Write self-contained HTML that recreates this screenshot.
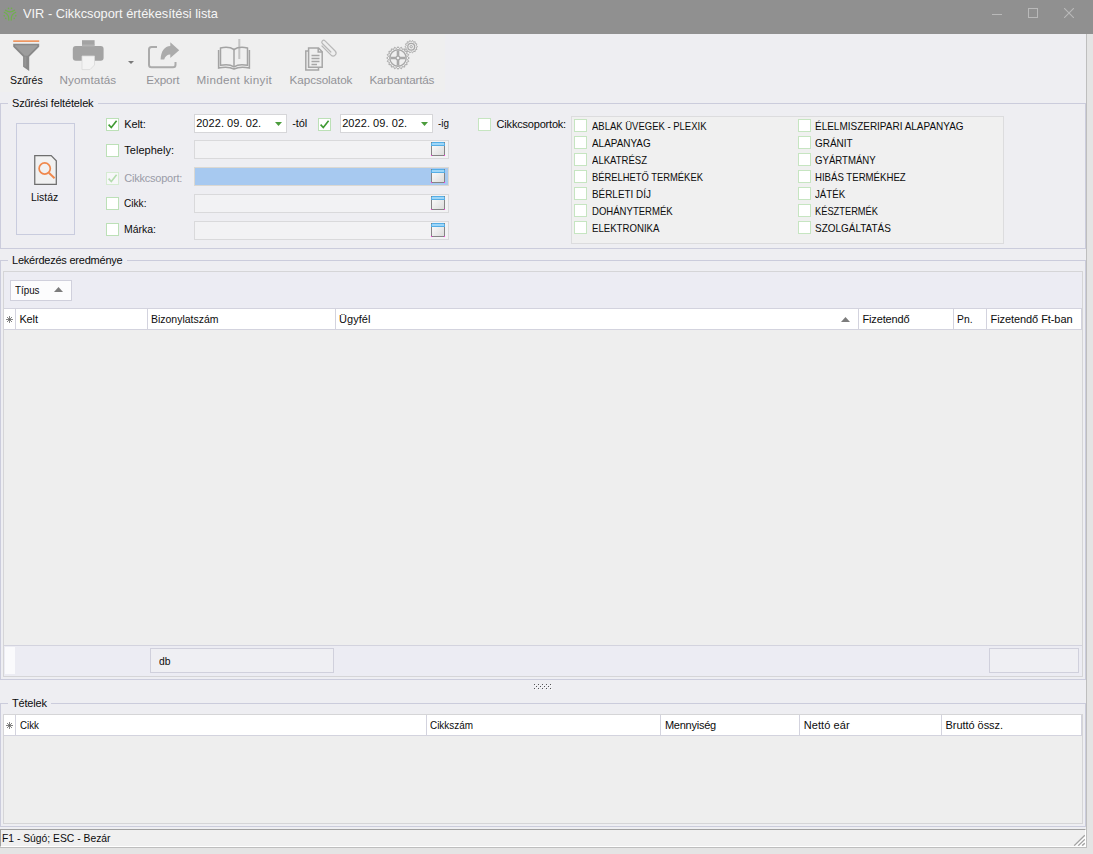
<!DOCTYPE html>
<html lang="hu">
<head>
<meta charset="utf-8">
<title>VIR - Cikkcsoport értékesítési lista</title>
<style>
html,body{margin:0;padding:0;}
body{width:1093px;height:854px;overflow:hidden;position:relative;background:#eeeef2;font-family:"Liberation Sans","DejaVu Sans",sans-serif;font-size:11px;color:#0c0c0c;}
.a{position:absolute;}
.t{position:absolute;white-space:nowrap;line-height:15px;height:15px;transform-origin:0 50%;}
</style>
</head>
<body>
<div class="a" style="left:0px;top:0px;width:1093px;height:34px;background:#909090;"></div>
<svg class="a" style="left:0;top:0;" width="20" height="28" viewBox="0 0 20 28"><g transform="translate(10 14.200)"><path d="M-4.500 -4 Q0 -0.800 4.500 -4" fill="none" stroke="#70b04c" stroke-width="1.250" stroke-linecap="round"/><circle cx="-1.500" cy="-5.800" r="0.800" fill="#70b04c"/><circle cx="1.500" cy="-5.800" r="0.800" fill="#70b04c"/><g transform="rotate(120)"><path d="M-4.500 -4 Q0 -0.800 4.500 -4" fill="none" stroke="#70b04c" stroke-width="1.250" stroke-linecap="round"/><circle cx="-1.500" cy="-5.800" r="0.800" fill="#70b04c"/><circle cx="1.500" cy="-5.800" r="0.800" fill="#70b04c"/></g><g transform="rotate(240)"><path d="M-4.500 -4 Q0 -0.800 4.500 -4" fill="none" stroke="#70b04c" stroke-width="1.250" stroke-linecap="round"/><circle cx="-1.500" cy="-5.800" r="0.800" fill="#70b04c"/><circle cx="1.500" cy="-5.800" r="0.800" fill="#70b04c"/></g></g></svg>
<div class="t" style="left:23.4px;top:5.9px;font-size:13.5px;transform:scaleX(0.9486);color:#f6f6f6;">VIR - Cikkcsoport értékesítési lista</div>
<div class="a" style="left:992px;top:14px;width:10px;height:1px;background:#b9b9b9;"></div>
<div class="a" style="left:1028px;top:8px;width:10px;height:10px;box-sizing:border-box;border:1px solid #b9b9b9;"></div>
<svg class="a" style="left:1064px;top:8px;" width="10" height="10" viewBox="0 0 10 10"><path d="M0 0L10 10M10 0L0 10" stroke="#b9b9b9" stroke-width="1.1"/></svg>
<div class="a" style="left:1087px;top:34px;width:6px;height:820px;background:#e4e4e4;"></div>
<div class="a" style="left:1086px;top:34px;width:1px;height:814px;background:#bebebe;"></div>
<div class="a" style="left:0px;top:34px;width:445px;height:58px;background:#efefef;"></div>
<svg class="a" style="left:12px;top:39px;" width="28" height="33" viewBox="0 0 28 33">
<rect x="1.200" y="1.300" width="26" height="1.700" fill="#ee9660"/>
<path d="M1.200 4.800 H27.200 V7.800 L17.200 17.800 V31.900 L11.100 27.700 V17.800 L1.200 7.800 Z" fill="#888888"/>
<path d="M3.200 6.300 H25.200 V7.200 L15.700 16.700 H12.700 L3.200 7.200 Z" fill="#9d9d9d"/>
<rect x="12.400" y="17.500" width="2" height="10" fill="#959595"/>
</svg>
<svg class="a" style="left:72px;top:39px;" width="33" height="32" viewBox="0 0 33 32">
<rect x="10" y="1.2" width="12.600" height="5" fill="#a3a3a3"/>
<rect x="0.800" y="6.900" width="30.800" height="14.800" rx="3" ry="3" fill="#a3a3a3"/>
<rect x="10" y="5.500" width="12.600" height="2" fill="#b2b2b2"/><path d="M10 17 H22.500 V26 L18 30.600 H10 Z" fill="#f3f3f3" stroke="#d9d9d9" stroke-width="0.800"/>
</svg>
<svg class="a" style="left:128px;top:61px;" width="6" height="3" viewBox="0 0 6 3"><path d="M0 0H6L3 3Z" fill="#7a7a7a"/></svg>
<svg class="a" style="left:146px;top:40px;" width="36" height="30" viewBox="0 0 36 30">
<path d="M11 7 H5.500 Q3 7 3 9.500 V24.800 Q3 27.300 5.500 27.300 H27 Q29.500 27.300 29.500 24.800 V22" fill="none" stroke="#ababab" stroke-width="2"/>
<path d="M14.600 19.600 C15 11 18.500 6.300 24.300 6 V2.200 L33.200 10.200 L24.300 18 V14.500 C21 14.500 19 16.500 18.200 19.600 Z" fill="#ababab"/>
</svg>
<svg class="a" style="left:217px;top:38px;" width="34" height="33" viewBox="0 0 34 33">
<rect x="21.300" y="1" width="2" height="20" fill="#c4c4c4"/>
<g fill="none" stroke="#a3a3a3" stroke-width="1.500">
<path d="M17 11.500 C13.500 9.200 8 9 3.500 10 V27.300 C8 26.300 13.500 26.500 17 28.800 C20.500 26.500 26 26.300 30.500 27.300 V10 C26 9 20.500 9.200 17 11.500 Z"/>
<path d="M17 11.500 V28.800"/>
<path d="M1.600 12 V30 C7 28.800 13 29 17 31 C21 29 27 28.800 32.400 30 V12"/>
</g></svg>
<svg class="a" style="left:303px;top:38px;" width="36" height="34" viewBox="0 0 36 34">
<g fill="none" stroke="#a6a6a6" stroke-width="1.500">
<path d="M5.600 10 H15.500 L19.200 13.700 V29.200 H5.600 Z"/>
<path d="M15.200 10 V14 H19.200"/>
<path d="M5.600 13 H2.800 V32 H15.500 V29.200"/>
</g>
<g stroke="#a6a6a6" stroke-width="1.300"><path d="M8.500 17.500H16.500M8.500 20.500H16.500M8.500 23.500H16.500M8.500 26.500H14"/></g>
<g fill="none" stroke="#b8b8b8" stroke-width="1.200" stroke-linecap="round" transform="translate(25.400 10.300) rotate(225) translate(-9.850 -4.100)"><path d="M16 1.200 H3.200 A2.900 2.900 0 0 0 3.200 7 H17.500 A1.900 1.900 0 0 0 17.500 3.200 H5.500"/></g>
</svg>
<svg class="a" style="left:384px;top:36px;" width="36" height="36" viewBox="0 0 36 36"><path d="M25.30 22.00 L23.48 23.50 L24.75 25.49 L22.55 26.36 L23.14 28.64 L20.79 28.79 L20.64 31.14 L18.36 30.55 L17.49 32.75 L15.50 31.48 L14.00 33.30 L12.50 31.48 L10.51 32.75 L9.64 30.55 L7.36 31.14 L7.21 28.79 L4.86 28.64 L5.45 26.36 L3.25 25.49 L4.52 23.50 L2.70 22.00 L4.52 20.50 L3.25 18.51 L5.45 17.64 L4.86 15.36 L7.21 15.21 L7.36 12.86 L9.64 13.45 L10.51 11.25 L12.50 12.52 L14.00 10.70 L15.50 12.52 L17.49 11.25 L18.36 13.45 L20.64 12.86 L20.79 15.21 L23.14 15.36 L22.55 17.64 L24.75 18.51 L23.48 20.50 Z" fill="none" stroke="#a8a8a8" stroke-width="1.0" stroke-linejoin="round"/><circle cx="14" cy="22" r="8.2" fill="none" stroke="#a8a8a8" stroke-width="1.4"/><circle cx="14" cy="22" r="1.9" fill="none" stroke="#a8a8a8" stroke-width="1.2"/><path d="M14 14.500V20M14 24V29.500M6.500 22H12M16 22H21.500" stroke="#a8a8a8" stroke-width="2.6"/><path d="M33.60 10.70 L32.07 11.81 L32.97 13.48 L31.11 13.82 L31.19 15.70 L29.37 15.20 L28.62 16.94 L27.20 15.70 L25.78 16.94 L25.03 15.20 L23.21 15.70 L23.29 13.82 L21.43 13.48 L22.33 11.81 L20.80 10.70 L22.33 9.59 L21.43 7.92 L23.29 7.58 L23.21 5.70 L25.03 6.20 L25.78 4.46 L27.20 5.70 L28.62 4.46 L29.37 6.20 L31.19 5.70 L31.11 7.58 L32.97 7.92 L32.07 9.59 Z" fill="none" stroke="#a8a8a8" stroke-width="0.9" stroke-linejoin="round"/><circle cx="27.200" cy="10.700" r="3.400" fill="none" stroke="#a8a8a8" stroke-width="1.300"/><circle cx="27.200" cy="10.700" r="1.200" fill="none" stroke="#a8a8a8" stroke-width="1"/></svg>
<div class="t" style="left:10.2px;top:71.7px;font-size:11.7px;transform:scaleX(0.8986);color:#111;">Szűrés</div>
<div class="t" style="left:59.5px;top:71.7px;font-size:11.7px;letter-spacing:0.105px;color:#939398;">Nyomtatás</div>
<div class="t" style="left:146.2px;top:71.7px;font-size:11.7px;letter-spacing:-0.097px;color:#939398;">Export</div>
<div class="t" style="left:196.5px;top:71.7px;font-size:11.7px;letter-spacing:0.295px;color:#939398;">Mindent kinyit</div>
<div class="t" style="left:289.6px;top:71.7px;font-size:11.7px;letter-spacing:-0.088px;color:#939398;">Kapcsolatok</div>
<div class="t" style="left:369.4px;top:71.7px;font-size:11.7px;letter-spacing:-0.168px;color:#939398;">Karbantartás</div>
<div class="a" style="left:0px;top:103px;width:1086px;height:146px;box-sizing:border-box;border:1px solid #cbccdc;"></div>
<div class="a" style="left:8px;top:97px;width:89.5px;height:13px;background:#eeeef2;"></div>
<div class="t" style="left:12.0px;top:96.0px;font-size:11px;letter-spacing:-0.126px;">Szűrési feltételek</div>
<div class="a" style="left:0px;top:260px;width:1086px;height:420px;box-sizing:border-box;border:1px solid #cbccdc;"></div>
<div class="a" style="left:8px;top:254px;width:118.5px;height:13px;background:#eeeef2;"></div>
<div class="t" style="left:12.0px;top:253.0px;font-size:11px;letter-spacing:-0.223px;">Lekérdezés eredménye</div>
<div class="a" style="left:0px;top:703px;width:1086px;height:124px;box-sizing:border-box;border:1px solid #cbccdc;"></div>
<div class="a" style="left:8px;top:697px;width:42.7px;height:13px;background:#eeeef2;"></div>
<div class="t" style="left:12.0px;top:696.0px;font-size:11px;letter-spacing:-0.197px;">Tételek</div>
<div class="a" style="left:16px;top:123px;width:59px;height:112px;background:#eeeef3;box-sizing:border-box;border:1px solid #c9ccde;"></div>
<svg class="a" style="left:32px;top:153px;" width="28" height="34" viewBox="0 0 28 34"><path d="M2.750 2.600 H19.200 L24.300 7.700 V31.300 H2.750 Z" fill="#f1f1f1" stroke="#6e6e6e" stroke-width="1.250" stroke-linejoin="miter"/><circle cx="12.700" cy="15.500" r="5.600" fill="none" stroke="#f0884c" stroke-width="1.700"/><path d="M16.800 19.800 L22.600 25.300" stroke="#f0884c" stroke-width="2" stroke-linecap="butt"/></svg>
<div class="t" style="left:31.3px;top:189.9px;font-size:11px;transform:scaleX(0.9426);">Listáz</div>
<div class="a" style="left:106px;top:118px;width:13px;height:13px;background:#fff;box-sizing:border-box;border:1px solid #bce0b7;"><svg width="11" height="11" viewBox="0 0 11 11" style="position:absolute;left:0;top:0"><path d="M1.600 5.600 L4.300 8.600 L9.600 1.800" fill="none" stroke="#3f9a32" stroke-width="1.600"/></svg></div>
<div class="t" style="left:124.2px;top:116.9px;font-size:11px;letter-spacing:-0.103px;">Kelt:</div>
<div class="a" style="left:106px;top:144px;width:13px;height:13px;background:#fff;box-sizing:border-box;border:1px solid #bce0b7;"></div>
<div class="t" style="left:124.2px;top:142.9px;font-size:11px;letter-spacing:0.045px;">Telephely:</div>
<div class="a" style="left:106px;top:172px;width:13px;height:13px;background:#f7f7f9;box-sizing:border-box;border:1px solid #d6ebd2;"><svg width="11" height="11" viewBox="0 0 11 11" style="position:absolute;left:0;top:0"><path d="M1.600 5.600 L4.300 8.600 L9.600 1.800" fill="none" stroke="#b4dcae" stroke-width="1.600"/></svg></div>
<div class="t" style="left:124.2px;top:170.9px;font-size:11px;letter-spacing:-0.211px;color:#9a9ca8;">Cikkcsoport:</div>
<div class="a" style="left:106px;top:197px;width:13px;height:13px;background:#fff;box-sizing:border-box;border:1px solid #bce0b7;"></div>
<div class="t" style="left:124.2px;top:195.9px;font-size:11px;transform:scaleX(0.9201);">Cikk:</div>
<div class="a" style="left:106px;top:223px;width:13px;height:13px;background:#fff;box-sizing:border-box;border:1px solid #bce0b7;"></div>
<div class="t" style="left:124.2px;top:221.9px;font-size:11px;transform:scaleX(0.9517);">Márka:</div>
<div class="a" style="left:194px;top:114px;width:93px;height:19px;background:#fff;box-sizing:border-box;border:1px solid #d6d6d9;"><svg width="7" height="4" viewBox="0 0 7 4" style="position:absolute;left:80px;top:7px"><path d="M0 0 H7 L3.500 4 Z" fill="#4b9c3c"/></svg></div>
<div class="t" style="left:196.2px;top:116.0px;font-size:11px;letter-spacing:0.059px;">2022. 09. 02.</div>
<div class="t" style="left:292.2px;top:116.0px;font-size:11px;letter-spacing:-0.070px;">-tól</div>
<div class="a" style="left:318px;top:118px;width:13px;height:13px;background:#fff;box-sizing:border-box;border:1px solid #bce0b7;"><svg width="11" height="11" viewBox="0 0 11 11" style="position:absolute;left:0;top:0"><path d="M1.600 5.600 L4.300 8.600 L9.600 1.800" fill="none" stroke="#3f9a32" stroke-width="1.600"/></svg></div>
<div class="a" style="left:340px;top:114px;width:93px;height:19px;background:#fff;box-sizing:border-box;border:1px solid #d6d6d9;"><svg width="7" height="4" viewBox="0 0 7 4" style="position:absolute;left:80px;top:7px"><path d="M0 0 H7 L3.500 4 Z" fill="#4b9c3c"/></svg></div>
<div class="t" style="left:342.2px;top:116.0px;font-size:11px;letter-spacing:0.059px;">2022. 09. 02.</div>
<div class="t" style="left:438.2px;top:116.0px;font-size:11px;transform:scaleX(0.8991);">-ig</div>
<div class="a" style="left:194px;top:140px;width:255px;height:19px;background:#f2f2f4;box-sizing:border-box;border:1px solid #d9d9db;"><svg width="14" height="14" viewBox="0 0 14 14" style="position:absolute;left:236px;top:1px"><defs><linearGradient id="wg0" x1="0" y1="0" x2="1" y2="1"><stop offset="0" stop-color="#ffffff"/><stop offset="1" stop-color="#dadada"/></linearGradient></defs><rect x="0.500" y="0.500" width="13" height="13" fill="url(#wg0)" stroke="#858585"/><path d="M1 0H13V1H14V4H0V1H1Z" fill="#55aee6"/><rect x="1" y="1" width="12" height="2" fill="#9fd6f7"/><rect x="0" y="13" width="1" height="1" fill="#ff30e0"/><rect x="13" y="13" width="1" height="1" fill="#ff30e0"/></svg></div>
<div class="a" style="left:194px;top:167px;width:255px;height:19px;background:#a7c9f0;box-sizing:border-box;border:1px solid #dbd8d2;"><svg width="14" height="14" viewBox="0 0 14 14" style="position:absolute;left:236px;top:1px"><defs><linearGradient id="wg1" x1="0" y1="0" x2="1" y2="1"><stop offset="0" stop-color="#ffffff"/><stop offset="1" stop-color="#dadada"/></linearGradient></defs><rect x="0.500" y="0.500" width="13" height="13" fill="url(#wg1)" stroke="#858585"/><path d="M1 0H13V1H14V4H0V1H1Z" fill="#55aee6"/><rect x="1" y="1" width="12" height="2" fill="#9fd6f7"/><rect x="0" y="13" width="1" height="1" fill="#ff30e0"/><rect x="13" y="13" width="1" height="1" fill="#ff30e0"/></svg></div>
<div class="a" style="left:194px;top:194px;width:255px;height:19px;background:#f2f2f4;box-sizing:border-box;border:1px solid #d9d9db;"><svg width="14" height="14" viewBox="0 0 14 14" style="position:absolute;left:236px;top:1px"><defs><linearGradient id="wg2" x1="0" y1="0" x2="1" y2="1"><stop offset="0" stop-color="#ffffff"/><stop offset="1" stop-color="#dadada"/></linearGradient></defs><rect x="0.500" y="0.500" width="13" height="13" fill="url(#wg2)" stroke="#858585"/><path d="M1 0H13V1H14V4H0V1H1Z" fill="#55aee6"/><rect x="1" y="1" width="12" height="2" fill="#9fd6f7"/><rect x="0" y="13" width="1" height="1" fill="#ff30e0"/><rect x="13" y="13" width="1" height="1" fill="#ff30e0"/></svg></div>
<div class="a" style="left:194px;top:221px;width:255px;height:19px;background:#f2f2f4;box-sizing:border-box;border:1px solid #d9d9db;"><svg width="14" height="14" viewBox="0 0 14 14" style="position:absolute;left:236px;top:1px"><defs><linearGradient id="wg3" x1="0" y1="0" x2="1" y2="1"><stop offset="0" stop-color="#ffffff"/><stop offset="1" stop-color="#dadada"/></linearGradient></defs><rect x="0.500" y="0.500" width="13" height="13" fill="url(#wg3)" stroke="#858585"/><path d="M1 0H13V1H14V4H0V1H1Z" fill="#55aee6"/><rect x="1" y="1" width="12" height="2" fill="#9fd6f7"/><rect x="0" y="13" width="1" height="1" fill="#ff30e0"/><rect x="13" y="13" width="1" height="1" fill="#ff30e0"/></svg></div>
<div class="a" style="left:478px;top:118px;width:13px;height:13px;background:#fff;box-sizing:border-box;border:1px solid #c6e5c1;"></div>
<div class="t" style="left:496.6px;top:117.1px;font-size:11px;letter-spacing:-0.196px;">Cikkcsoportok:</div>
<div class="a" style="left:571px;top:116px;width:433px;height:128px;background:#f0f0f0;box-sizing:border-box;border:1px solid #dcdcde;"></div>
<div class="a" style="left:574px;top:119px;width:13px;height:13px;background:#fff;box-sizing:border-box;border:1px solid #c6e5c1;"></div>
<div class="t" style="left:591.7px;top:119.0px;font-size:11px;transform:scaleX(0.8630);">ABLAK ÜVEGEK - PLEXIK</div>
<div class="a" style="left:798px;top:119px;width:13px;height:13px;background:#fff;box-sizing:border-box;border:1px solid #c6e5c1;"></div>
<div class="t" style="left:815.3px;top:119.0px;font-size:11px;transform:scaleX(0.9070);">ÉLELMISZERIPARI ALAPANYAG</div>
<div class="a" style="left:574px;top:136px;width:13px;height:13px;background:#fff;box-sizing:border-box;border:1px solid #c6e5c1;"></div>
<div class="t" style="left:591.7px;top:136.0px;font-size:11px;transform:scaleX(0.9029);">ALAPANYAG</div>
<div class="a" style="left:798px;top:136px;width:13px;height:13px;background:#fff;box-sizing:border-box;border:1px solid #c6e5c1;"></div>
<div class="t" style="left:815.3px;top:136.0px;font-size:11px;transform:scaleX(0.9071);">GRÁNIT</div>
<div class="a" style="left:574px;top:153px;width:13px;height:13px;background:#fff;box-sizing:border-box;border:1px solid #c6e5c1;"></div>
<div class="t" style="left:591.7px;top:153.0px;font-size:11px;transform:scaleX(0.8694);">ALKATRÉSZ</div>
<div class="a" style="left:798px;top:153px;width:13px;height:13px;background:#fff;box-sizing:border-box;border:1px solid #c6e5c1;"></div>
<div class="t" style="left:815.3px;top:153.0px;font-size:11px;transform:scaleX(0.8736);">GYÁRTMÁNY</div>
<div class="a" style="left:574px;top:170px;width:13px;height:13px;background:#fff;box-sizing:border-box;border:1px solid #c6e5c1;"></div>
<div class="t" style="left:591.7px;top:170.0px;font-size:11px;transform:scaleX(0.8531);">BÉRELHETŐ TERMÉKEK</div>
<div class="a" style="left:798px;top:170px;width:13px;height:13px;background:#fff;box-sizing:border-box;border:1px solid #c6e5c1;"></div>
<div class="t" style="left:815.3px;top:170.0px;font-size:11px;transform:scaleX(0.8745);">HIBÁS TERMÉKHEZ</div>
<div class="a" style="left:574px;top:187px;width:13px;height:13px;background:#fff;box-sizing:border-box;border:1px solid #c6e5c1;"></div>
<div class="t" style="left:591.7px;top:187.0px;font-size:11px;transform:scaleX(0.9005);">BÉRLETI DÍJ</div>
<div class="a" style="left:798px;top:187px;width:13px;height:13px;background:#fff;box-sizing:border-box;border:1px solid #c6e5c1;"></div>
<div class="t" style="left:815.3px;top:187.0px;font-size:11px;transform:scaleX(0.8822);">JÁTÉK</div>
<div class="a" style="left:574px;top:204px;width:13px;height:13px;background:#fff;box-sizing:border-box;border:1px solid #c6e5c1;"></div>
<div class="t" style="left:591.7px;top:204.0px;font-size:11px;transform:scaleX(0.8686);">DOHÁNYTERMÉK</div>
<div class="a" style="left:798px;top:204px;width:13px;height:13px;background:#fff;box-sizing:border-box;border:1px solid #c6e5c1;"></div>
<div class="t" style="left:815.3px;top:204.0px;font-size:11px;transform:scaleX(0.8448);">KÉSZTERMÉK</div>
<div class="a" style="left:574px;top:221px;width:13px;height:13px;background:#fff;box-sizing:border-box;border:1px solid #c6e5c1;"></div>
<div class="t" style="left:591.7px;top:221.0px;font-size:11px;transform:scaleX(0.8750);">ELEKTRONIKA</div>
<div class="a" style="left:798px;top:221px;width:13px;height:13px;background:#fff;box-sizing:border-box;border:1px solid #c6e5c1;"></div>
<div class="t" style="left:815.3px;top:221.0px;font-size:11px;transform:scaleX(0.9051);">SZOLGÁLTATÁS</div>
<div class="a" style="left:3px;top:271px;width:1080px;height:406px;background:#eeeeee;box-sizing:border-box;border:1px solid #d5d5d7;"></div>
<div class="a" style="left:4px;top:272px;width:1078px;height:36px;background:#ececf3;"></div>
<div class="a" style="left:10px;top:280px;width:62px;height:21px;background:#fcfcfd;box-sizing:border-box;border:1px solid #d0d0dc;"></div>
<div class="t" style="left:14.9px;top:282.5px;font-size:11px;transform:scaleX(0.8904);">Típus</div>
<svg class="a" style="left:54px;top:287px;" width="9" height="5" viewBox="0 0 9 5"><path d="M0 5 L4.500 0 L9 5 Z" fill="#7c7c7c"/></svg>
<div class="a" style="left:4px;top:308px;width:1078px;height:22px;background:#fff;box-sizing:border-box;border-top:1px solid #d3d3de;border-bottom:1px solid #d3d3de;"></div>
<div class="a" style="left:15px;top:309px;width:1px;height:20px;background:#d3d3de;"></div>
<div class="a" style="left:147px;top:309px;width:1px;height:20px;background:#d3d3de;"></div>
<div class="a" style="left:335px;top:309px;width:1px;height:20px;background:#d3d3de;"></div>
<div class="a" style="left:858px;top:309px;width:1px;height:20px;background:#d3d3de;"></div>
<div class="a" style="left:953px;top:309px;width:1px;height:20px;background:#d3d3de;"></div>
<div class="a" style="left:986px;top:309px;width:1px;height:20px;background:#d3d3de;"></div>
<div class="a" style="left:1081px;top:309px;width:1px;height:20px;background:#d3d3de;"></div>
<div class="t" style="left:19.4px;top:311.5px;font-size:11px;letter-spacing:-0.117px;">Kelt</div>
<div class="t" style="left:151.0px;top:311.5px;font-size:11px;transform:scaleX(0.9518);">Bizonylatszám</div>
<div class="t" style="left:339.0px;top:311.5px;font-size:11px;letter-spacing:0.052px;">Ügyfél</div>
<div class="t" style="left:862.5px;top:311.5px;font-size:11px;letter-spacing:-0.146px;">Fizetendő</div>
<div class="t" style="left:957.0px;top:311.5px;font-size:11px;transform:scaleX(0.9385);">Pn.</div>
<div class="t" style="left:990.5px;top:311.5px;font-size:11px;letter-spacing:-0.072px;">Fizetendő Ft-ban</div>
<svg class="a" style="left:841px;top:317px;" width="9" height="5" viewBox="0 0 9 5"><path d="M0 5 L4.500 0 L9 5 Z" fill="#7c7c7c"/></svg>
<svg class="a" style="left:6px;top:316px;" width="7" height="7" viewBox="0 0 7 7"><path d="M3.500 0V7M0 3.500H7M1 1L6 6M6 1L1 6" stroke="#5c5c5c" stroke-width="0.750" fill="none"/></svg>
<div class="a" style="left:4px;top:645px;width:1078px;height:31px;background:#ececf3;box-sizing:border-box;border-top:1px solid #d3d3de;"></div>
<div class="a" style="left:5px;top:647px;width:10px;height:27px;background:#fafafc;"></div>
<div class="a" style="left:150px;top:648px;width:184px;height:25px;background:#efeff3;box-sizing:border-box;border:1px solid #d0d0dc;"></div>
<div class="t" style="left:158.5px;top:653.8px;font-size:11px;transform:scaleX(0.9388);">db</div>
<div class="a" style="left:989px;top:648px;width:90px;height:25px;background:#efeff3;box-sizing:border-box;border:1px solid #d0d0dc;"></div>
<svg class="a" style="left:534px;top:684px;" width="18" height="6" viewBox="0 0 18 6"><rect x="1" y="1" width="1" height="1" fill="#fbfbfd"/><rect x="0" y="0" width="1" height="1" fill="#555558"/><rect x="5" y="1" width="1" height="1" fill="#fbfbfd"/><rect x="4" y="0" width="1" height="1" fill="#555558"/><rect x="9" y="1" width="1" height="1" fill="#fbfbfd"/><rect x="8" y="0" width="1" height="1" fill="#555558"/><rect x="13" y="1" width="1" height="1" fill="#fbfbfd"/><rect x="12" y="0" width="1" height="1" fill="#555558"/><rect x="17" y="1" width="1" height="1" fill="#fbfbfd"/><rect x="16" y="0" width="1" height="1" fill="#555558"/><rect x="3" y="3" width="1" height="1" fill="#fbfbfd"/><rect x="2" y="2" width="1" height="1" fill="#555558"/><rect x="7" y="3" width="1" height="1" fill="#fbfbfd"/><rect x="6" y="2" width="1" height="1" fill="#555558"/><rect x="11" y="3" width="1" height="1" fill="#fbfbfd"/><rect x="10" y="2" width="1" height="1" fill="#555558"/><rect x="15" y="3" width="1" height="1" fill="#fbfbfd"/><rect x="14" y="2" width="1" height="1" fill="#555558"/><rect x="1" y="5" width="1" height="1" fill="#fbfbfd"/><rect x="0" y="4" width="1" height="1" fill="#555558"/><rect x="5" y="5" width="1" height="1" fill="#fbfbfd"/><rect x="4" y="4" width="1" height="1" fill="#555558"/><rect x="9" y="5" width="1" height="1" fill="#fbfbfd"/><rect x="8" y="4" width="1" height="1" fill="#555558"/><rect x="13" y="5" width="1" height="1" fill="#fbfbfd"/><rect x="12" y="4" width="1" height="1" fill="#555558"/><rect x="17" y="5" width="1" height="1" fill="#fbfbfd"/><rect x="16" y="4" width="1" height="1" fill="#555558"/></svg>
<div class="a" style="left:3px;top:714px;width:1080px;height:110px;background:#eeeeee;box-sizing:border-box;border:1px solid #d5d5d7;"></div>
<div class="a" style="left:4px;top:715px;width:1078px;height:21px;background:#fff;box-sizing:border-box;border-bottom:1px solid #d3d3de;"></div>
<div class="a" style="left:15px;top:715px;width:1px;height:20px;background:#d3d3de;"></div>
<div class="a" style="left:426px;top:715px;width:1px;height:20px;background:#d3d3de;"></div>
<div class="a" style="left:660px;top:715px;width:1px;height:20px;background:#d3d3de;"></div>
<div class="a" style="left:799px;top:715px;width:1px;height:20px;background:#d3d3de;"></div>
<div class="a" style="left:941px;top:715px;width:1px;height:20px;background:#d3d3de;"></div>
<div class="a" style="left:1081px;top:715px;width:1px;height:20px;background:#d3d3de;"></div>
<div class="t" style="left:19.6px;top:717.6px;font-size:11px;transform:scaleX(0.8882);">Cikk</div>
<div class="t" style="left:430.2px;top:717.6px;font-size:11px;transform:scaleX(0.9020);">Cikkszám</div>
<div class="t" style="left:664.9px;top:717.6px;font-size:11px;letter-spacing:-0.245px;">Mennyiség</div>
<div class="t" style="left:803.7px;top:717.6px;font-size:11px;letter-spacing:0.083px;">Nettó eár</div>
<div class="t" style="left:945.5px;top:717.6px;font-size:11px;letter-spacing:-0.048px;">Bruttó össz.</div>
<svg class="a" style="left:6px;top:722px;" width="7" height="7" viewBox="0 0 7 7"><path d="M3.500 0V7M0 3.500H7M1 1L6 6M6 1L1 6" stroke="#5c5c5c" stroke-width="0.750" fill="none"/></svg>
<div class="a" style="left:0px;top:829px;width:1086px;height:18px;background:#f0f0f0;box-sizing:border-box;border-top:1px solid #a0a0a0;border-left:1px solid #a0a0a0;border-bottom:1px solid #fff;border-right:1px solid #fff;"></div>
<div class="a" style="left:0px;top:847px;width:1087px;height:1px;background:#bebebe;"></div>
<div class="a" style="left:0px;top:848px;width:1093px;height:6px;background:#e4e4e4;"></div>
<svg class="a" style="left:1072px;top:833px;" width="13" height="13" viewBox="0 0 13 13"><g stroke="#ffffff" stroke-width="1.200"><path d="M3.200 13.600 L13.800 3.300M7.300 13.600 L13.800 7.400M11.200 13.600 L13.800 11.200"/></g><g stroke="#a2a2a2" stroke-width="1.300"><path d="M2.200 12.600 L12.800 2.300M6.300 12.600 L12.800 6.400M10.200 12.600 L12.800 10.200"/></g></svg>
<div class="t" style="left:2.2px;top:830.5px;font-size:11px;transform:scaleX(0.9390);">F1 - Súgó; ESC - Bezár</div>
</body>
</html>
